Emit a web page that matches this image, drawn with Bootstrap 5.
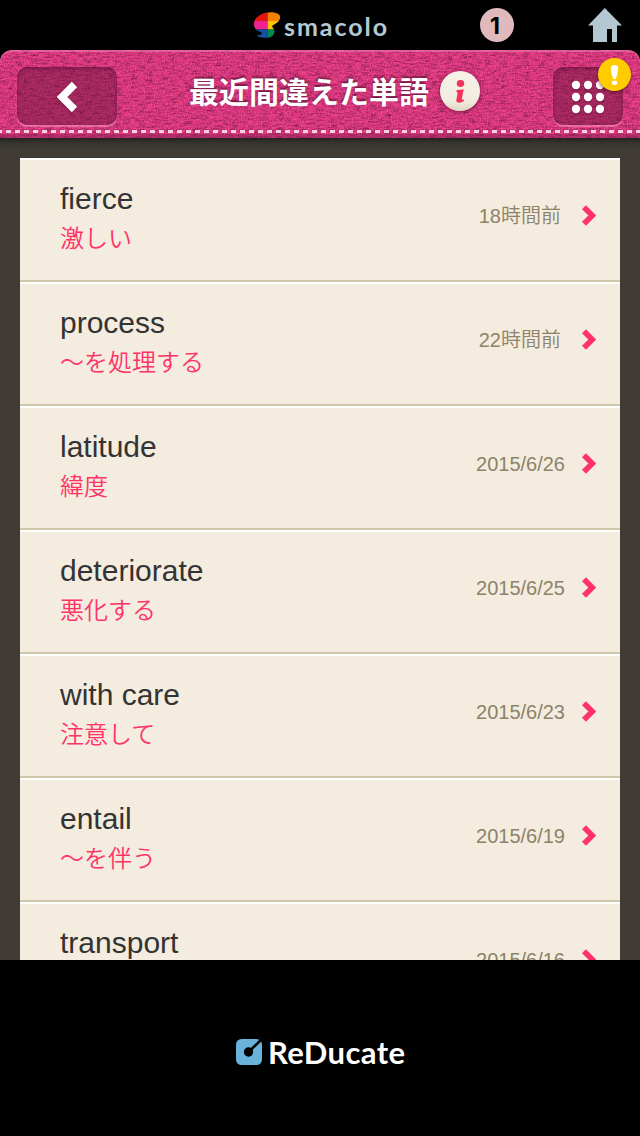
<!DOCTYPE html>
<html lang="ja">
<head>
<meta charset="utf-8">
<meta name="viewport" content="width=device-width, initial-scale=1">
<title>最近間違えた単語</title>
<link href="https://cdn.jsdelivr.net/npm/bootstrap@5.3.0/dist/css/bootstrap.min.css" rel="stylesheet">
<style>
body{background:#000;font-family:"Liberation Sans","Noto Sans CJK JP",sans-serif;height:1136px;overflow:hidden}
.topbar{height:50px}
.brandsvg{margin-left:253px}
.count{width:34px;height:34px;background:#dfb9bb;color:#000;font:bold 23px/36px Inter,sans-serif;margin-left:92px;padding-right:4px}
.house{margin-left:74px}
.cloth{height:88px;border-radius:12px 12px 0 0;background:#dc357d}
.weave{z-index:0}
.cloth>*:not(.weave){z-index:1}
.pocket{height:58px;margin-top:17px;border-radius:10px;background:rgba(98,18,54,.43);box-shadow:inset 0 2px 4px rgba(80,10,45,.45),0 2px 1px rgba(255,170,205,.5);border:0}
.backbtn{width:100px;margin-left:17px}
.menubtn{width:70px;margin-left:73px}
.heading{font:bold 30px/44px "Noto Sans CJK JP",sans-serif;margin:18px 0 0 72px;width:240px;white-space:nowrap;text-shadow:0 -2px 2px rgba(95,20,55,.75)}
.infobtn{width:40px;height:40px;margin:21px 0 0 11px;background:linear-gradient(#f6f2e8,#f1ecdf 75%,#dfd7c4);box-shadow:0 1px 4px rgba(80,10,40,.7);border:0}
.alertdot{left:45px;top:-9px;width:33px;height:33px;background:#fc0;box-shadow:0 2px 3px rgba(70,10,40,.55)}
.stage{height:822px;background:linear-gradient(#24221e,#37342e 5px,#403c35 12px,#403c35);padding:20px 20px 0}
.words{border-radius:0}
.word{height:124px;border:0;border-top:2px solid #fff!important;border-bottom:2px solid #cfc7a9!important;background:#f3ecdf;border-radius:0!important;padding:0 24px 0 40px}
.term{font-size:30px;line-height:36px;color:#333;margin-top:21px}
.sense{font-size:24px;line-height:36px;color:#f36;font-weight:350;margin-top:4px}
.when{font-size:20px;line-height:30px;color:#8d8369;margin:41px 17px 0 auto;font-weight:350}
.ago{margin-right:21px}
.arrow{margin-top:45px}
.foot{height:176px}
.mk{margin:77px 0 0 235px}
</style>
</head>
<body>
<header class="topbar d-flex align-items-center">
  <svg class="brandsvg" width="135" height="50" viewBox="0 0 135 50">
    <defs><clipPath id="mark"><path d="M8 14.500C13 11.500 25 11 27 16C28 21 23.500 23.500 19.500 25.500C18 27 21.500 28 21.500 31.500C21 37 16 38.500 9 37.500C5 37 3 35.500 4.500 35C8 35.500 9.500 33.500 8.500 32.500C3 31 1 28 1 24C1 19.500 4 16.500 8 14.500Z"/></clipPath></defs>
    <g clip-path="url(#mark)"><path fill="#e31613" d="M0 10h14.500v11H0z"/><path fill="#f08200" d="M14.500 10H29v11H14.500z"/><path fill="#ed2290" d="M0 21h14.500v8.500H0z"/><path fill="#fdc500" d="M14.500 21H29v8.500H14.500z"/><path fill="#14529b" d="M0 29.500h14.500V40H0z"/><path fill="#008a50" d="M14.500 29.500H29V40H14.500z"/></g>
    <text x="31" y="36" font-family="Lato,sans-serif" font-weight="700" font-size="25" fill="#b4c9d2" textLength="103" lengthAdjust="spacing">smacolo</text>
  </svg>
  <span class="count rounded-circle text-center">1</span>
  <svg class="house" width="34" height="34" viewBox="0 0 34 34"><path fill="#b2c7cf" d="M16.800 0L34 17.500h-5V34h-5V21h-5v13H5V17.500H0z"/></svg>
</header>

<nav class="cloth position-relative d-flex align-items-start overflow-hidden text-white">
  <svg class="weave position-absolute top-0 start-0" width="640" height="88">
    <defs>
      <filter id="across" x="0" y="0" width="100%" height="100%" color-interpolation-filters="sRGB"><feTurbulence type="fractalNoise" baseFrequency=".13 .6" numOctaves="2" seed="4"/><feColorMatrix values="0 0 0 0 .48  0 0 0 0 .09  0 0 0 0 .29  1.900 0 0 0 -.75"/></filter>
      <filter id="down" x="0" y="0" width="100%" height="100%" color-interpolation-filters="sRGB"><feTurbulence type="fractalNoise" baseFrequency=".7 .45" numOctaves="2" seed="9"/><feColorMatrix values="0 0 0 0 1  0 0 0 0 .36  0 0 0 0 .62  1.700 0 0 0 -.7"/></filter>
    </defs>
    <rect width="640" height="88" filter="url(#across)"/><rect width="640" height="88" filter="url(#down)"/>
    <path d="M0 12Q0 1 12 1H628Q640 1 640 12" fill="none" stroke="#f48ab5" stroke-width="2" opacity=".5"/>
    <path d="M0 84h640v4H0z" fill="#861f50" opacity=".45"/>
    <path d="M-4 80h650" stroke="#8d2656" stroke-width="2" opacity=".5" stroke-dasharray="5 4"/>
    <path d="M-3 81.500h650" stroke="#f8d0e0" stroke-width="3" stroke-dasharray="5 4"/>
  </svg>
  <button class="pocket backbtn position-relative p-0" aria-label="戻る"><svg class="d-block" width="100" height="58"><path d="M57.500 17L44.500 30L57.500 43" fill="none" stroke="#6c1840" stroke-opacity=".5" stroke-width="8" transform="translate(0 1)"/><path d="M57.500 17.500L45 30L57.500 42.500" fill="none" stroke="#fff" stroke-width="7.500"/></svg></button>
  <h1 class="heading position-relative mb-0">最近間違えた単語</h1>
  <button class="infobtn position-relative rounded-circle p-0" aria-label="情報"><svg class="d-block" width="40" height="40" fill="#f5315e"><ellipse cx="20.500" cy="12.500" rx="3.700" ry="3.400"/><path d="M16.700 19q4.500 0 7-.8l-1.800 9.300q-.3 2 2.200 1v1.600q-3.500 2-6 1.500q-2.200-.5-1.700-3.200l1.200-6.500q.2-1-1.200-1z"/></svg></button>
  <button class="pocket menubtn position-relative p-0" aria-label="メニュー">
    <svg class="d-block" width="70" height="58"><g fill="#701742" opacity=".5" transform="translate(0 1.500)"><circle cx="23" cy="18.500" r="4.500"/><circle cx="35" cy="18.500" r="4.500"/><circle cx="47" cy="18.500" r="4.500"/><circle cx="23" cy="30" r="4.500"/><circle cx="35" cy="30" r="4.500"/><circle cx="47" cy="30" r="4.500"/><circle cx="23" cy="42" r="4.500"/><circle cx="35" cy="42" r="4.500"/><circle cx="47" cy="42" r="4.500"/></g><g fill="#fff"><circle cx="23" cy="18" r="4.200"/><circle cx="35" cy="18" r="4.200"/><circle cx="47" cy="18" r="4.200"/><circle cx="23" cy="30" r="4.200"/><circle cx="35" cy="30" r="4.200"/><circle cx="47" cy="30" r="4.200"/><circle cx="23" cy="42" r="4.200"/><circle cx="35" cy="42" r="4.200"/><circle cx="47" cy="42" r="4.200"/></g></svg>
    <span class="alertdot position-absolute rounded-circle"><svg class="d-block" width="33" height="33" fill="#fff"><path d="M12.900 10q.2-3 3.600-3t3.600 3q0 5-2.200 11h-2.800q-2.200-6-2.200-11z"/><ellipse cx="16.500" cy="24.700" rx="2.700" ry="2.200"/></svg></span>
  </button>
</nav>

<main class="stage overflow-hidden">
  <div class="list-group words" id="words"></div>
</main>

<footer class="foot bg-black overflow-hidden">
  <svg class="mk d-block" width="180" height="32" viewBox="0 0 180 32">
    <rect x="1" y="2" width="26" height="26" rx="5.500" fill="#69b2d9"/><circle cx="13.500" cy="15" r="4.700"/><path d="M14 14.500L27 2" stroke="#000" stroke-width="2.500"/>
    <text x="33" y="26.500" font-family="Lato,sans-serif" font-weight="700" font-size="31" fill="#fff" textLength="137" lengthAdjust="spacing">ReDucate</text>
  </svg>
</footer>

<script src="https://cdn.jsdelivr.net/npm/bootstrap@5.3.0/dist/js/bootstrap.bundle.min.js"></script>
<script>
const entries=[["fierce","激しい","18時間前"],["process","〜を処理する","22時間前"],["latitude","緯度","2015/6/26"],["deteriorate","悪化する","2015/6/25"],["with care","注意して","2015/6/23"],["entail","〜を伴う","2015/6/19"],["transport","","2015/6/16"]];
document.getElementById("words").innerHTML=entries.map(([term,sense,when])=>`
<div class="list-group-item word d-flex align-items-start">
  <div><div class="term">${term}</div><div class="sense">${sense}</div></div>
  <div class="when ${when.includes("前")?"ago":""}">${when}</div>
  <svg class="arrow" width="14" height="22" viewBox="0 0 14 22"><path d="M2 2.200L10.300 10.500L2 18.800" fill="none" stroke="#f36" stroke-width="5.600"/></svg>
</div>`).join("");
</script>
</body>
</html>
